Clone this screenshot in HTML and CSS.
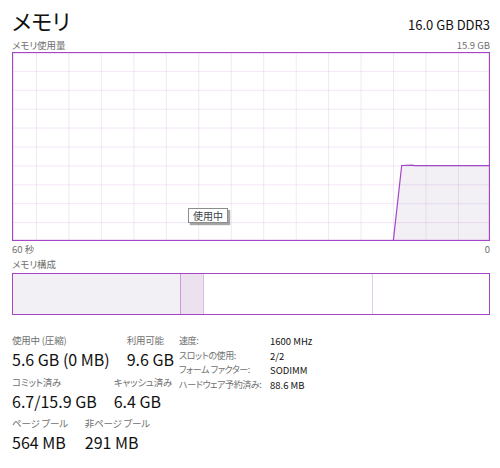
FILE: index.html
```html
<!DOCTYPE html>
<html lang="ja">
<head>
<meta charset="utf-8">
<link rel="stylesheet" href="styles.css">
</head>
<body>
<div class="page">
  <div class="header">
    <div class="title">メモリ</div>
    <div class="spec">16.0 GB DDR3</div>
  </div>
  <div class="caption-row">
    <span>メモリ使用量</span>
    <span>15.9 GB</span>
  </div>
  <div class="graph">
    <svg class="graph-svg" width="478" height="189" viewBox="0 0 478 189">
      <polygon points="381.3,189 389.7,113.5 401,113.2 478,113.7 478,189" fill="#f2f0f4"/>
      <g stroke="#b56ad0" stroke-opacity="0.16" stroke-width="1">
        <line x1="0" y1="19.4" x2="478" y2="19.4"/>
        <line x1="0" y1="38.3" x2="478" y2="38.3"/>
        <line x1="0" y1="57.2" x2="478" y2="57.2"/>
        <line x1="0" y1="76.1" x2="478" y2="76.1"/>
        <line x1="0" y1="95" x2="478" y2="95"/>
        <line x1="0" y1="113.9" x2="478" y2="113.9"/>
        <line x1="0" y1="132.8" x2="478" y2="132.8"/>
        <line x1="0" y1="151.7" x2="478" y2="151.7"/>
        <line x1="0" y1="170.6" x2="478" y2="170.6"/>
        <line x1="24.5" y1="0" x2="24.5" y2="189"/>
        <line x1="56.9" y1="0" x2="56.9" y2="189"/>
        <line x1="89.4" y1="0" x2="89.4" y2="189"/>
        <line x1="121.9" y1="0" x2="121.9" y2="189"/>
        <line x1="154.3" y1="0" x2="154.3" y2="189"/>
        <line x1="186.8" y1="0" x2="186.8" y2="189"/>
        <line x1="219.3" y1="0" x2="219.3" y2="189"/>
        <line x1="251.7" y1="0" x2="251.7" y2="189"/>
        <line x1="284.2" y1="0" x2="284.2" y2="189"/>
        <line x1="316.6" y1="0" x2="316.6" y2="189"/>
        <line x1="349.1" y1="0" x2="349.1" y2="189"/>
        <line x1="381.5" y1="0" x2="381.5" y2="189"/>
        <line x1="414" y1="0" x2="414" y2="189"/>
        <line x1="446.5" y1="0" x2="446.5" y2="189"/>
      </g>
      <polyline points="381.3,189 389.7,113.5 401,113.2 402,113.7 478,113.7" fill="none" stroke="#a545c8" stroke-width="1.2"/>
      <rect x="0.5" y="0.5" width="477" height="188" fill="none" stroke="#a545c8" stroke-width="1.3"/>
    </svg>
    <div class="tooltip">使用中</div>
  </div>
  <div class="axis-row">
    <span>60 秒</span>
    <span>0</span>
  </div>
  <div class="caption-row composition-caption">
    <span>メモリ構成</span>
  </div>
  <div class="composition">
    <div class="seg seg-inuse"></div>
    <div class="seg seg-modified"></div>
    <div class="seg seg-standby"></div>
    <div class="seg seg-free"></div>
  </div>
  <div class="stats">
    <div class="stats-left">
      <div class="stat-row">
        <div class="stat"><div class="stat-label">使用中 (圧縮)</div><div class="stat-value">5.6 GB (0 MB)</div></div>
        <div class="stat"><div class="stat-label">利用可能</div><div class="stat-value">9.6 GB</div></div>
      </div>
      <div class="stat-row">
        <div class="stat"><div class="stat-label">コミット済み</div><div class="stat-value">6.7/15.9 GB</div></div>
        <div class="stat"><div class="stat-label">キャッシュ済み</div><div class="stat-value">6.4 GB</div></div>
      </div>
      <div class="stat-row">
        <div class="stat"><div class="stat-label">ページ プール</div><div class="stat-value">564 MB</div></div>
        <div class="stat"><div class="stat-label">非ページ プール</div><div class="stat-value">291 MB</div></div>
      </div>
    </div>
    <div class="stats-right">
      <span class="info-label">速度:</span><span class="info-value">1600 MHz</span>
      <span class="info-label">スロットの使用:</span><span class="info-value">2/2</span>
      <span class="info-label">フォーム ファクター:</span><span class="info-value">SODIMM</span>
      <span class="info-label">ハードウェア予約済み:</span><span class="info-value">88.6 MB</span>
    </div>
  </div>
</div>
</body>
</html>
```

FILE: styles.css
```css
html, body {
  margin: 0;
  padding: 0;
  background: #ffffff;
}

body {
  font-family: "Noto Sans CJK JP", "Noto Sans", sans-serif;
  font-feature-settings: "palt";
  color: #000000;
  width: 500px;
  height: 468px;
  overflow: hidden;
}

.page {
  padding: 6px 10px 0 12px;
}

.header {
  display: flex;
  justify-content: space-between;
  align-items: baseline;
  height: 33px;
}

.title {
  font-size: 22px;
  line-height: 28px;
  color: #111111;
}

.spec {
  font-size: 13px;
  line-height: 18px;
  color: #111111;
}

.caption-row {
  display: flex;
  justify-content: space-between;
  font-size: 9.5px;
  line-height: 13px;
  color: #6f6f6f;
}

.graph {
  position: relative;
  height: 189px;
}

.graph-svg {
  display: block;
}

.tooltip {
  position: absolute;
  left: 176px;
  top: 156px;
  width: 38px;
  height: 13px;
  border: 1px solid #8c8c8c;
  background: #ffffff;
  box-shadow: 2px 2px 1px rgba(0, 0, 0, 0.35);
  font-size: 10px;
  line-height: 13px;
  text-align: center;
  color: #3a3f48;
}

.axis-row {
  display: flex;
  justify-content: space-between;
  margin-top: 2px;
  font-size: 9.5px;
  line-height: 12px;
  color: #6f6f6f;
}

.composition-caption {
  margin-top: 3px;
  line-height: 12px;
}

.composition {
  display: flex;
  margin-top: 3px;
  height: 40px;
  border: 1px solid #a545c8;
  border-top-width: 1.5px;
}

.seg {
  height: 100%;
}

.seg-inuse {
  width: 167px;
  background: #f2f0f4;
  border-right: 1px solid #c79ad8;
}

.seg-modified {
  width: 22px;
  background: #ebe1ef;
  border-right: 1px solid #d9bde4;
}

.seg-standby {
  width: 168px;
  background: #ffffff;
  border-right: 1px solid #e3cdeb;
}

.seg-free {
  flex: 1;
  background: #ffffff;
}

.stats {
  display: flex;
  margin-top: 19px;
}

.stats-left {
  width: 167px;
  display: flex;
  flex-direction: column;
  gap: 4.5px;
}

.stat-row {
  display: flex;
  gap: 17px;
}

.stat-label {
  font-size: 9.5px;
  line-height: 13px;
  letter-spacing: -0.2px;
  color: #6f6f6f;
  white-space: nowrap;
}

.stat-value {
  font-size: 16px;
  line-height: 24px;
  color: #111111;
  white-space: nowrap;
}

.stats-right {
  display: grid;
  grid-template-columns: 91px auto;
  grid-auto-rows: 14.5px;
  align-content: start;
  font-size: 9.5px;
  line-height: 14.5px;
}

.info-label {
  font-size: 9px;
  letter-spacing: -0.4px;
  color: #6f6f6f;
  white-space: nowrap;
}

.info-value {
  color: #111111;
  white-space: nowrap;
}
```
